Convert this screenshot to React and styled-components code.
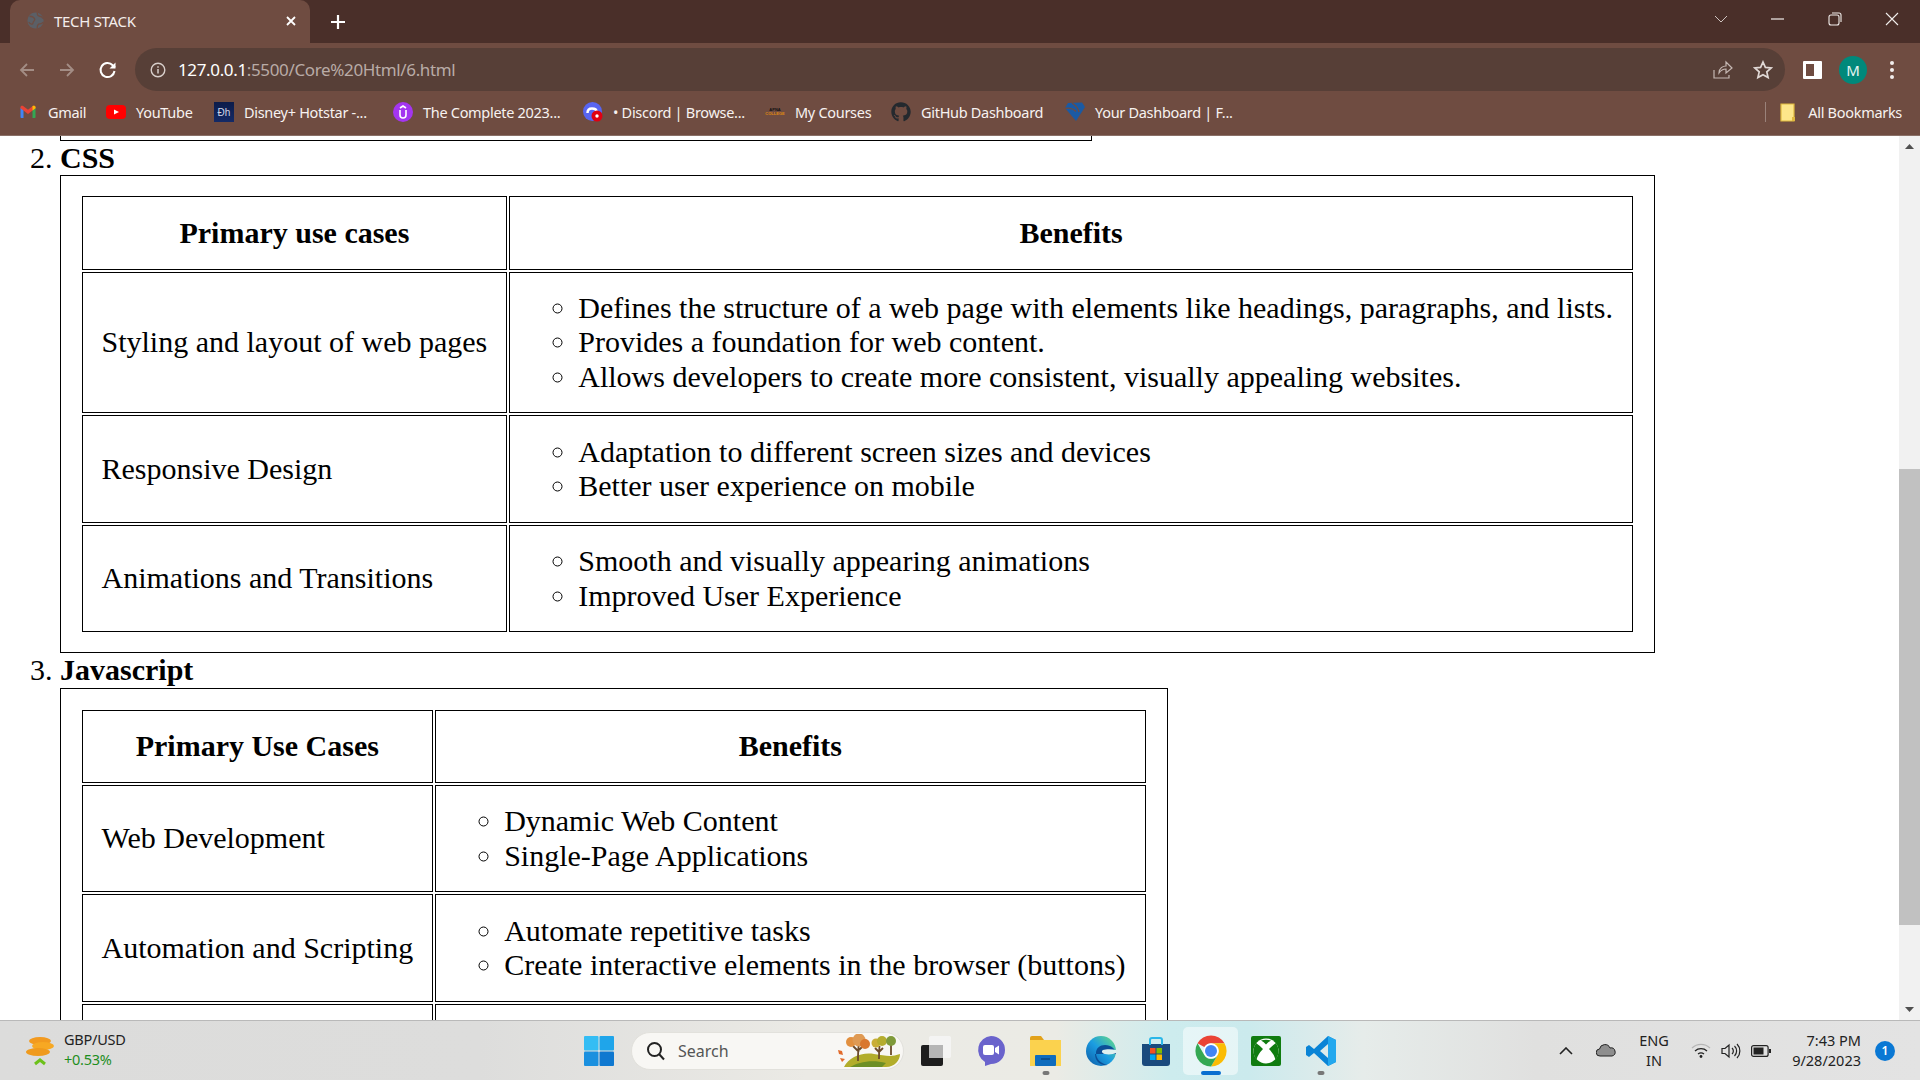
import styled, { createGlobalStyle } from "styled-components";
import { FaGithub } from "react-icons/fa";

const GlobalStyle = createGlobalStyle`
  html, body { margin: 0; padding: 0; height: 100%; overflow: hidden; background: #fff; }
  * { box-sizing: border-box; }
`;

const uiFont = `"Noto Sans", "Open Sans", sans-serif`;

const Screen = styled.div`
  display: flex;
  flex-direction: column;
  height: 100vh;
  width: 100vw;
  overflow: hidden;
`;

/* tab strip */
const TabStrip = styled.div`
  height: 43px;
  flex: none;
  background: #4a2f29;
  display: flex;
  align-items: flex-end;
  padding-left: 10px;
  font-family: ${uiFont};
`;
const Tab = styled.div`
  width: 300px;
  height: 43px;
  background: #6f4c41;
  border-radius: 10px 10px 0 0;
  display: flex;
  align-items: center;
  padding: 0 10px 2px 17px;
  color: #f4eeec;
  font-size: 15px;
`;
const TabTitle = styled.span`
  margin-left: 10px;
  flex: 1;
  letter-spacing: -0.3px;
`;
const NewTab = styled.div`
  margin-left: 19px;
  height: 43px;
  display: flex;
  align-items: center;
`;
const WindowControls = styled.div`
  margin-left: auto;
  height: 43px;
  display: flex;
  align-items: center;
  padding-bottom: 6px;
`;
const WinButton = styled.div`
  width: 57px;
  display: flex;
  justify-content: center;
`;

/* toolbar */
const Toolbar = styled.div`
  height: 48px;
  flex: none;
  background: #6f4c41;
  display: flex;
  align-items: flex-end;
  padding-left: 18px;
  font-family: ${uiFont};
`;
const NavIcon = styled.div`
  width: ${p => p.$w || 40}px;
  height: 43px;
  display: flex;
  align-items: center;
`;
const Omnibox = styled.div`
  width: 1650px;
  margin-left: 1px;
  height: 43px;
  background: #573f37;
  border-radius: 22px;
  display: flex;
  align-items: center;
  padding: 0 2px 0 15px;
`;
const Url = styled.div`
  margin-left: 12px;
  font-size: 17px;
  letter-spacing: -0.36px;
  color: #b9aba6;
  flex: 1;
`;
const UrlHost = styled.span`
  color: #fff;
`;
const OmniIcon = styled.div`
  width: 40px;
  display: flex;
  justify-content: center;
`;
const ToolRight = styled.div`
  flex: 1;
  height: 43px;
  display: flex;
  align-items: center;
  padding-left: 18px;
`;
const Avatar = styled.div`
  width: 28px;
  height: 28px;
  border-radius: 50%;
  background: #00897b;
  color: #e6f4f1;
  font-size: 15px;
  display: flex;
  align-items: center;
  justify-content: center;
  margin-left: 17px;
`;
const Dots = styled.div`
  margin-left: 23px;
  display: flex;
  flex-direction: column;
  gap: 3px;
`;
const Dot = styled.span`
  width: 4px;
  height: 4px;
  border-radius: 50%;
  background: #f2eeec;
`;

/* bookmarks */
const BookmarkBar = styled.div`
  height: 45px;
  flex: none;
  background: #6f4c41;
  border-bottom: 1px solid #8a7067;
  display: flex;
  align-items: center;
  padding: 0 18px 2px 18px;
  gap: 20px;
  font-family: ${uiFont};
  font-size: 14.5px;
  letter-spacing: -0.3px;
  color: #f7f2f0;
`;
const Bookmark = styled.div`
  display: flex;
  align-items: center;
  gap: 10px;
  white-space: nowrap;
`;
const BookmarkLabel = styled.span`
  width: ${p => p.$w}px;
`;
const BookmarkIcon = styled.div`
  width: 20px;
  height: 20px;
  flex: none;
  display: flex;
  align-items: center;
  justify-content: center;
`;
const HotstarIcon = styled(BookmarkIcon)`
  background: linear-gradient(#0c1c4a, #142a66);
  color: #cfd6ea;
  font-size: 10px;
  letter-spacing: 0;
  font-family: "Liberation Sans", sans-serif;
`;
const ApnaIcon = styled(BookmarkIcon)`
  flex-direction: column;
  font-family: "Liberation Sans", sans-serif;
  font-weight: 700;
  font-size: 4px;
  line-height: 4px;
  letter-spacing: 0;
  color: #111;
`;
const ApnaLine = styled.span`
  color: ${p => p.$c || "#111"};
`;
const AllBookmarks = styled.div`
  margin-left: auto;
  display: flex;
  align-items: center;
  gap: 12px;
  height: 20px;
  padding-left: 14px;
  border-left: 1px solid #9a827a;
`;

/* page */
const Main = styled.div`
  flex: 1;
  min-height: 0;
  display: flex;
`;
const Page = styled.div`
  flex: 1;
  min-width: 0;
  overflow: hidden;
  background: #fff;
  color: #000;
  font-family: "Liberation Serif", "Times New Roman", serif;
  font-size: 30px;
  line-height: 34.25px;
`;
const PrevTableEnd = styled.div`
  margin-left: 60px;
  width: 1032px;
  height: 5px;
  border: 1px solid #000;
  border-top: 0;
`;
const Sections = styled.ol`
  margin: 0;
  padding: 0 0 0 60px;
`;
const SectionTitle = styled.strong`
  display: block;
`;
const Table = styled.table`
  border: 1px solid #000;
  padding: ${p => p.$top}px 19px 18px 19px;
  border-spacing: 2px;
`;
const HeadCell = styled.th`
  border: 1px solid #000;
  padding: 18.5px;
  font-weight: 700;
  text-align: center;
`;
const Cell = styled.td`
  border: 1px solid #000;
  padding: 18.5px;
  height: ${p => (p.$h ? `${p.$h}px` : "auto")};
`;
const Benefits = styled.ul`
  margin: 0;
  padding: 0 1px 0 50px;
  list-style: circle;
`;

/* scrollbar */
const Scrollbar = styled.div`
  width: 21px;
  flex: none;
  background: #f1f1f1;
  display: flex;
  flex-direction: column;
  align-items: center;
`;
const ScrollArrow = styled.div`
  height: 21px;
  flex: none;
  display: flex;
  align-items: center;
  justify-content: center;
`;
const ScrollSpace = styled.div`
  flex: ${p => p.$grow};
`;
const ScrollThumb = styled.div`
  width: 100%;
  height: 456px;
  flex: none;
  background: #c1c1c1;
`;

/* taskbar */
const Taskbar = styled.div`
  height: 60px;
  flex: none;
  border-top: 1px solid #b9b9b9;
  background: linear-gradient(90deg, #dcdcdb 0%, #dddddc 25%, #ebeae5 42%, #ebebe5 55%, #cdecee 61%, #cbeaed 65%, #e6ecea 71%, #e0e0df 80%, #e3e3e3 100%);
  display: flex;
  align-items: center;
  font-family: ${uiFont};
  color: #222;
`;
const Ticker = styled.div`
  width: 584px;
  flex: none;
  display: flex;
  align-items: center;
  padding-left: 26px;
  gap: 10px;
`;
const TickerText = styled.div`
  font-size: 14.5px;
  line-height: 20px;
  letter-spacing: -0.25px;
  padding-bottom: 3px;
`;
const TickerUp = styled.div`
  color: #1e8e1e;
`;
const Centre = styled.div`
  display: flex;
  align-items: center;
`;
const AppRow = styled.div`
  margin-left: 4px;
  display: flex;
  align-items: center;
`;
const SearchBox = styled.div`
  margin-left: 17px;
  width: 273px;
  height: 38px;
  border-radius: 19px;
  background: #f8f7f4;
  border: 1px solid #e2e1dc;
  display: flex;
  align-items: center;
  padding: 0 1px 0 14px;
  color: #555;
  font-size: 16px;
`;
const SearchLabel = styled.span`
  margin-left: 12px;
  flex: 1;
`;
const AppSlot = styled.div`
  width: ${p => p.$w || 55}px;
  height: 48px;
  flex: none;
  display: flex;
  align-items: center;
  justify-content: center;
  border-radius: 5px;
  position: relative;
  background: ${p => (p.$active ? "rgba(255,255,255,0.5)" : "transparent")};
`;
const RunDot = styled.span`
  position: absolute;
  bottom: 0;
  left: 50%;
  transform: translateX(-50%);
  height: 4px;
  border-radius: 2px;
  width: ${p => (p.$active ? 20 : 7)}px;
  background: ${p => (p.$active ? "#0a6fd0" : "#777")};
`;
const Tray = styled.div`
  margin-left: auto;
  display: flex;
  align-items: center;
  padding-right: 25px;
  font-size: 14.5px;
`;
const TrayIcon = styled.div`
  width: ${p => p.$w || 30}px;
  display: flex;
  justify-content: center;
`;
const Lang = styled.div`
  width: 50px;
  text-align: center;
  line-height: 20px;
  margin: 0 7px 0 0;
  padding-bottom: 2px;
`;
const Clock = styled.div`
  width: 85px;
  text-align: right;
  line-height: 20px;
  white-space: nowrap;
  padding-bottom: 2px;
`;
const Badge = styled.div`
  margin-left: 14px;
  width: 20px;
  height: 20px;
  border-radius: 50%;
  background: #0a78d4;
  color: #fff;
  font-size: 12px;
  font-weight: 600;
  display: flex;
  align-items: center;
  justify-content: center;
`;

const Svg = ({ s = 20, w, h, vb = "0 0 24 24", children }) => (
  <svg width={w || s} height={h || s} viewBox={vb} fill="none">{children}</svg>
);

const GmailIcon = () => (
  <Svg s={18} vb="0 0 24 24">
    <path d="M2 20V6l4 3v11H3a1 1 0 0 1-1-1z" fill="#4285f4" />
    <path d="M22 20V6l-4 3v11h3a1 1 0 0 0 1-1z" fill="#34a853" />
    <path d="M2 7V5.500C2 3.500 4 3 5.500 4L12 9l6.500-5C20 3 22 3.500 22 5.500V7l-4 3-6 4.500L6 10z" fill="#ea4335" />
    <path d="M18 4v6l4-3V5.500C22 3.500 19.500 3 18 4z" fill="#fbbc04" />
  </Svg>
);
const YoutubeIcon = () => (
  <Svg vb="0 0 20 20">
    <rect x="0" y="3" width="20" height="14" rx="4" fill="#f00" />
    <path d="M8 7.500l5 2.500-5 2.500z" fill="#fff" />
  </Svg>
);
const UdemyIcon = () => (
  <Svg vb="0 0 20 20">
    <circle cx="10" cy="10" r="10" fill="#a435f0" />
    <path d="M7 8v5a3 3 0 0 0 6 0V8M7 6l3-2 3 2" stroke="#fff" strokeWidth="1.600" />
  </Svg>
);
const DiscordIcon = () => (
  <Svg vb="0 0 20 20">
    <circle cx="9.500" cy="9.500" r="9.500" fill="#5865f2" />
    <path d="M4.500 11c0-3 2-4.500 4.500-4.500s4.500 1 4.500 3" stroke="#fff" strokeWidth="2.500" />
    <circle cx="14" cy="14" r="5.500" fill="#e00012" />
    <circle cx="14" cy="14" r="1.700" fill="#fff" />
  </Svg>
);
const DashIcon = () => (
  <Svg w={20} h={20} vb="0 0 20 20">
    <path d="M3 1l14-.5 3 4.500-9 14L0 6z" fill="#1b5aa3" />
    <path d="M0 6.500c5-1 8 0 11 3M7 1c3 2 6 4 7 9" stroke="#6f4c41" strokeWidth="1.300" />
  </Svg>
);
const FolderMark = () => (
  <Svg w={16} h={19} vb="0 0 16 19">
    <path d="M1 1h13v17H1z" fill="#fde68a" stroke="#e0b93f" strokeWidth="1.200" />
    <path d="M12 14h3v4h-3z" fill="#e0b93f" />
  </Svg>
);
const AutumnTrees = () => (
  <Svg w={66} h={33} vb="0 0 66 33">
    <path d="M8 33c5-10 18-15 30-13s18 3 26 0c0 6-5 13-14 13z" fill="#b2ad2b" />
    <path d="M14 33c8-5 22-8 36-4l-4 4z" fill="#6d8f25" />
    <path d="M22 27c0-6 0-12 1-18M23 18l-6-6M23 16l5-5M43 25c0-5 0-8 .5-13M43 18l-4-4M43 18l4-4M55 21V10" stroke="#6b4a2a" strokeWidth="1.800" />
    <circle cx="15" cy="8" r="5" fill="#e2903f" />
    <circle cx="23" cy="6" r="6.500" fill="#df9a53" />
    <circle cx="29" cy="10" r="5" fill="#d9772f" />
    <circle cx="40" cy="9" r="4.500" fill="#c9ae37" />
    <circle cx="46" cy="7" r="5" fill="#b5ad2f" />
    <circle cx="55" cy="7" r="5" fill="#7f9a3a" />
    <path d="M2 16l4 1 1 4-4-1zM4 24l5 1-3 3z" fill="#e26a2a" />
  </Svg>
);
const XboxIcon = () => (
  <Svg s={30} vb="0 0 30 30">
    <rect x="0" y="0" width="30" height="30" rx="2" fill="#107c10" />
    <circle cx="15" cy="15" r="12.500" fill="#fff" />
    <path d="M10 4.500Q15 3 20 4.500Q17 6 15 8.500Q13 6 10 4.500z" fill="#107c10" />
    <path d="M5 7Q3 10 2.500 15Q2.500 20 5.500 23.500Q7 18 12 13Q8 9 5 7z" fill="#107c10" />
    <path d="M25 7Q27 10 27.500 15Q27.500 20 24.500 23.500Q23 18 18 13Q22 9 25 7z" fill="#107c10" />
  </Svg>
);
const EdgeIcon = () => (
  <Svg s={30} vb="0 0 30 30">
    <defs>
      <linearGradient id="edgeFill" x1="0" y1="1" x2="1" y2="0">
        <stop offset="0" stopColor="#0c59a4" />
        <stop offset="0.5" stopColor="#1b9de2" />
        <stop offset="1" stopColor="#6bdf7e" />
      </linearGradient>
    </defs>
    <circle cx="15" cy="15" r="15" fill="url(#edgeFill)" />
    <path d="M30 18c0-5-5-9-11-9-5 0-9 3-9 8 0 6 5 11 12 12-8 1-13-4-13-11" fill="#0b4f97" />
    <path d="M30 17c-2 1-7 2-11 1-3-.5-4-3-2-4 3-1 9-1 13 0z" fill="#dff1f0" />
  </Svg>
);

const bookmarks = [
  { name: "Gmail", w: 38, icon: <BookmarkIcon><GmailIcon /></BookmarkIcon> },
  { name: "YouTube", w: 58, icon: <BookmarkIcon><YoutubeIcon /></BookmarkIcon> },
  { name: "Disney+ Hotstar -...", w: 129, icon: <HotstarIcon>Ðh</HotstarIcon> },
  { name: "The Complete 2023...", w: 140, icon: <BookmarkIcon><UdemyIcon /></BookmarkIcon> },
  { name: "• Discord | Browse...", w: 132, icon: <BookmarkIcon><DiscordIcon /></BookmarkIcon> },
  { name: "My Courses", w: 76, icon: <ApnaIcon><ApnaLine>APNA</ApnaLine><ApnaLine $c="#e08a12">COLLEGE</ApnaLine></ApnaIcon> },
  { name: "GitHub Dashboard", w: 124, icon: <BookmarkIcon><FaGithub size={20} color="#24292e" /></BookmarkIcon> },
  { name: "Your Dashboard | F...", w: 135, icon: <BookmarkIcon><DashIcon /></BookmarkIcon> },
];

const cssRows = [
  { use: "Styling and layout of web pages", items: ["Defines the structure of a web page with elements like headings, paragraphs, and lists.", "Provides a foundation for web content.", "Allows developers to create more consistent, visually appealing websites."] },
  { use: "Responsive Design", items: ["Adaptation to different screen sizes and devices", "Better user experience on mobile"] },
  { use: "Animations and Transitions", items: ["Smooth and visually appearing animations", "Improved User Experience"] },
];
const jsRows = [
  { use: "Web Development", items: ["Dynamic Web Content", "Single-Page Applications"] },
  { use: "Automation and Scripting", items: ["Automate repetitive tasks", "Create interactive elements in the browser (buttons)"] },
];

function TechTable({ head, rows, cutRow, top }) {
  return (
    <Table $top={top}>
      <thead>
        <tr>
          <HeadCell>{head}</HeadCell>
          <HeadCell>Benefits</HeadCell>
        </tr>
      </thead>
      <tbody>
        {rows.map(r => (
          <tr key={r.use}>
            <Cell>{r.use}</Cell>
            <Cell>
              <Benefits>
                {r.items.map(i => <li key={i}>{i}</li>)}
              </Benefits>
            </Cell>
          </tr>
        ))}
        {cutRow && (
          <tr>
            <Cell $h={108} />
            <Cell />
          </tr>
        )}
      </tbody>
    </Table>
  );
}

export default function App() {
  return (
    <Screen>
      <GlobalStyle />
      <TabStrip>
        <Tab>
          <Svg s={17} vb="0 0 20 20">
            <circle cx="10" cy="10" r="9.500" fill="#5b5f66" />
            <path d="M3 5c3 0 5 1 6 3s-2 3-2 5-3 2-5-1M12 1c0 3 1 4 3 4s3 1 4 3M12 19c0-3 1-5 3-5s3-1 4-2" stroke="#6f4c41" strokeWidth="1.500" />
          </Svg>
          <TabTitle>TECH STACK</TabTitle>
          <Svg s={18} vb="0 0 18 18">
            <path d="M5 5l8 8M13 5l-8 8" stroke="#fff" strokeWidth="1.800" />
          </Svg>
        </Tab>
        <NewTab>
          <Svg s={18} vb="0 0 18 18">
            <path d="M9 2v14M2 9h14" stroke="#fff" strokeWidth="2.200" />
          </Svg>
        </NewTab>
        <WindowControls>
          <WinButton>
            <Svg w={14} h={8} vb="0 0 14 8"><path d="M1 1l6 6 6-6" stroke="#cfc4c0" strokeWidth="1" /></Svg>
          </WinButton>
          <WinButton>
            <Svg w={13} h={2} vb="0 0 13 2"><path d="M0 1h13" stroke="#f2eeec" strokeWidth="1.200" /></Svg>
          </WinButton>
          <WinButton>
            <Svg s={14} vb="0 0 14 14">
              <rect x="1" y="3" width="10" height="10" rx="2" stroke="#f2eeec" strokeWidth="1.100" />
              <path d="M4 1h7a2 2 0 0 1 2 2v7" stroke="#f2eeec" strokeWidth="1.100" />
            </Svg>
          </WinButton>
          <WinButton>
            <Svg s={14} vb="0 0 14 14"><path d="M1 1l12 12M13 1L1 13" stroke="#f2eeec" strokeWidth="1.100" /></Svg>
          </WinButton>
        </WindowControls>
      </TabStrip>

      <Toolbar>
        <NavIcon>
          <Svg s={18} vb="0 0 18 18"><path d="M16 9H3M9 3L3 9l6 6" stroke="#a38d85" strokeWidth="1.800" /></Svg>
        </NavIcon>
        <NavIcon>
          <Svg s={18} vb="0 0 18 18"><path d="M2 9h13M9 3l6 6-6 6" stroke="#a38d85" strokeWidth="1.800" /></Svg>
        </NavIcon>
        <NavIcon $w={36}>
          <Svg s={20} vb="0 0 20 20">
            <path d="M16.500 11a7 7 0 1 1-1.800-5.700L17 7.500" stroke="#fff" strokeWidth="2" />
            <path d="M17.500 2.500v6h-6z" fill="#fff" />
          </Svg>
        </NavIcon>
        <Omnibox>
          <Svg s={16} vb="0 0 16 16">
            <circle cx="8" cy="8" r="6.800" stroke="#d8cfcb" strokeWidth="1.400" />
            <path d="M8 7v4.500M8 4.200v1.500" stroke="#d8cfcb" strokeWidth="1.500" />
          </Svg>
          <Url><UrlHost>127.0.0.1</UrlHost>:5500/Core%20Html/6.html</Url>
          <OmniIcon>
            <Svg s={20} vb="0 0 20 20">
              <path d="M1 10v8h15v-3M6 13c0-5 4-7 7-7V2l6 6-6 5V9c-3 0-5 1-7 4z" stroke="#c5b8b3" strokeWidth="1.200" />
            </Svg>
          </OmniIcon>
          <OmniIcon>
            <Svg s={20} vb="0 0 20 20">
              <path d="M10 2l2.400 5.400 5.800.6-4.400 3.900 1.300 5.700L10 14.700l-5.100 2.900 1.300-5.700L1.800 8l5.800-.6z" stroke="#e0d8d5" strokeWidth="1.700" />
            </Svg>
          </OmniIcon>
        </Omnibox>
        <ToolRight>
          <Svg w={19} h={18} vb="0 0 19 18">
            <rect x="0" y="0" width="19" height="18" rx="1" fill="#fff" />
            <rect x="3" y="3" width="8" height="12" fill="#6f4c41" />
          </Svg>
          <Avatar>M</Avatar>
          <Dots><Dot /><Dot /><Dot /></Dots>
        </ToolRight>
      </Toolbar>

      <BookmarkBar>
        {bookmarks.map(b => (
          <Bookmark key={b.name}>{b.icon}<BookmarkLabel $w={b.w}>{b.name}</BookmarkLabel></Bookmark>
        ))}
        <AllBookmarks>
          <FolderMark />
          All Bookmarks
        </AllBookmarks>
      </BookmarkBar>

      <Main>
        <Page>
          <PrevTableEnd />
          <Sections start={2}>
            <li>
              <SectionTitle>CSS</SectionTitle>
              <TechTable head="Primary use cases" rows={cssRows} top={18} />
            </li>
            <li>
              <SectionTitle>Javascript</SectionTitle>
              <TechTable head="Primary Use Cases" rows={jsRows} top={19} cutRow />
            </li>
          </Sections>
        </Page>
        <Scrollbar>
          <ScrollArrow>
            <Svg w={9} h={5} vb="0 0 9 5"><path d="M4.500 0L9 5H0z" fill="#505050" /></Svg>
          </ScrollArrow>
          <ScrollSpace $grow={312} />
          <ScrollThumb />
          <ScrollSpace $grow={74} />
          <ScrollArrow>
            <Svg w={9} h={5} vb="0 0 9 5"><path d="M0 0h9L4.500 5z" fill="#505050" /></Svg>
          </ScrollArrow>
        </Scrollbar>
      </Main>

      <Taskbar>
        <Ticker>
          <Svg w={28} h={30} vb="0 0 28 30">
            <ellipse cx="14" cy="5" rx="11" ry="4" fill="#f29a1f" />
            <ellipse cx="17" cy="10" rx="11" ry="4" fill="#f7a823" />
            <ellipse cx="12" cy="16" rx="12" ry="4" fill="#ef9a1d" />
            <path d="M9 28l5-4 5 4" stroke="#6cc11a" strokeWidth="3" />
          </Svg>
          <TickerText>
            GBP/USD
            <TickerUp>+0.53%</TickerUp>
          </TickerText>
        </Ticker>
        <Centre>
          <Svg s={30} vb="0 0 30 30">
            <rect x="0" y="0" width="14.500" height="14.500" rx="1" fill="#34bdf4" />
            <rect x="15.500" y="0" width="14.500" height="14.500" rx="1" fill="#1fa5ea" />
            <rect x="0" y="15.500" width="14.500" height="14.500" rx="1" fill="#1a90df" />
            <rect x="15.500" y="15.500" width="14.500" height="14.500" rx="1" fill="#0f78d0" />
          </Svg>
          <SearchBox>
            <Svg s={20} vb="0 0 20 20">
              <circle cx="8.500" cy="8.500" r="6.500" stroke="#222" strokeWidth="2" />
              <path d="M13 13l5 5.500" stroke="#222" strokeWidth="2" />
            </Svg>
            <SearchLabel>Search</SearchLabel>
            <AutumnTrees />
          </SearchBox>
          <AppRow>
            <AppSlot>
              <Svg s={30} vb="0 0 30 30">
                <rect x="0" y="9" width="22" height="21" rx="2" fill="#1d1d1d" />
                <rect x="8" y="0" width="22" height="22" rx="2" fill="#f6f6f6" opacity="0.85" />
                <rect x="8" y="9" width="14" height="13" fill="#b5b5b5" />
              </Svg>
            </AppSlot>
            <AppSlot>
              <Svg s={30} vb="0 0 30 30">
                <path d="M15 0a14 14 0 0 1 14 14c0 8-6 14-14 14l-6 2v-4A14 14 0 0 1 15 0z" fill="#6a63cc" />
                <rect x="7" y="9" width="11" height="10" rx="2" fill="#fff" />
                <path d="M19 12l4-2.500v9L19 16z" fill="#fff" />
              </Svg>
            </AppSlot>
            <AppSlot>
              <Svg w={31} h={30} vb="0 0 31 30">
                <path d="M0 2a2 2 0 0 1 2-2h9l3 4H0z" fill="#e2a21a" />
                <rect x="0" y="4" width="31" height="26" fill="#fbd24e" />
                <rect x="5" y="19" width="21" height="11" rx="1" fill="#0f6cbd" />
                <path d="M11 23h9" stroke="#0a3f75" strokeWidth="1.200" />
              </Svg>
              <RunDot />
            </AppSlot>
            <AppSlot>
              <EdgeIcon />
            </AppSlot>
            <AppSlot>
              <Svg s={30} vb="0 0 30 30">
                <path d="M1 8h28v19a3 3 0 0 1-3 3H4a3 3 0 0 1-3-3z" fill="#1a4a7d" />
                <path d="M9 9V4a2 2 0 0 1 2-2h8a2 2 0 0 1 2 2v5" stroke="#29b6e8" strokeWidth="2" />
                <rect x="9" y="12" width="5.500" height="5.500" fill="#f25022" />
                <rect x="15.500" y="12" width="5.500" height="5.500" fill="#7fba00" />
                <rect x="9" y="18.500" width="5.500" height="5.500" fill="#00a4ef" />
                <rect x="15.500" y="18.500" width="5.500" height="5.500" fill="#ffb900" />
              </Svg>
            </AppSlot>
            <AppSlot $active>
              <Svg s={34} vb="0 0 48 48">
                <path d="M4.950 13A22 22 0 0 1 43.050 13H24A11 11 0 0 0 14.470 18.500Z" fill="#ea4335" />
                <path d="M43.050 13A22 22 0 0 1 24 46L33.530 29.500A11 11 0 0 0 24 13Z" fill="#fbbc04" />
                <path d="M24 46A22 22 0 0 1 4.950 13L14.470 29.500A11 11 0 0 0 33.530 29.500Z" fill="#34a853" />
                <circle cx="24" cy="24" r="10.500" fill="#fff" />
                <circle cx="24" cy="24" r="8.500" fill="#4285f4" />
              </Svg>
              <RunDot $active />
            </AppSlot>
            <AppSlot>
              <XboxIcon />
            </AppSlot>
            <AppSlot>
              <Svg s={30} vb="0 0 30 30">
                <path d="M22 0l8 4v22l-8 4L8 17l-5 4-3-2v-8l3-2 5 4zM22 8l-8 7 8 7z" fill="#0a84d6" />
                <path d="M22 0l8 4v22l-8 4z" fill="#23a8ee" />
              </Svg>
              <RunDot />
            </AppSlot>
          </AppRow>
        </Centre>
        <Tray>
          <TrayIcon $w={34}>
            <Svg w={14} h={8} vb="0 0 14 8"><path d="M1 7l6-6 6 6" stroke="#222" strokeWidth="1.600" /></Svg>
          </TrayIcon>
          <TrayIcon $w={46}>
            <Svg w={20} h={13} vb="0 0 20 13">
              <path d="M4 12a3.500 3.500 0 0 1-.5-7A5.500 5.500 0 0 1 14 4a4 4 0 0 1 2 8z" fill="#8e8e8e" stroke="#222" strokeWidth="1" />
            </Svg>
          </TrayIcon>
          <Lang>ENG<br />IN</Lang>
          <TrayIcon>
            <Svg w={20} h={15} vb="0 0 20 15">
              <path d="M1 5a13 13 0 0 1 18 0" stroke="#b5b5b5" strokeWidth="1.200" />
              <path d="M4 8a9 9 0 0 1 12 0M7 11a5 5 0 0 1 6 0" stroke="#222" strokeWidth="1.300" />
              <circle cx="10" cy="13.500" r="1.400" fill="#222" />
            </Svg>
          </TrayIcon>
          <TrayIcon>
            <Svg w={20} h={16} vb="0 0 20 16">
              <path d="M1 5.500h3L8 2v12l-4-3.500H1z" stroke="#222" strokeWidth="1.200" />
              <path d="M11 5a4 4 0 0 1 0 6M13.500 3a7 7 0 0 1 0 10M16 1a10 10 0 0 1 0 14" stroke="#222" strokeWidth="1.200" />
            </Svg>
          </TrayIcon>
          <TrayIcon>
            <Svg w={20} h={12} vb="0 0 20 12">
              <rect x="0.600" y="0.600" width="16.500" height="10.800" rx="2" stroke="#222" strokeWidth="1.200" />
              <rect x="2.500" y="2.500" width="10" height="7" fill="#222" />
              <path d="M18 4h2v4h-2z" fill="#222" />
            </Svg>
          </TrayIcon>
          <Clock>7:43 PM<br />9/28/2023</Clock>
          <Badge>1</Badge>
        </Tray>
      </Taskbar>
    </Screen>
  );
}
